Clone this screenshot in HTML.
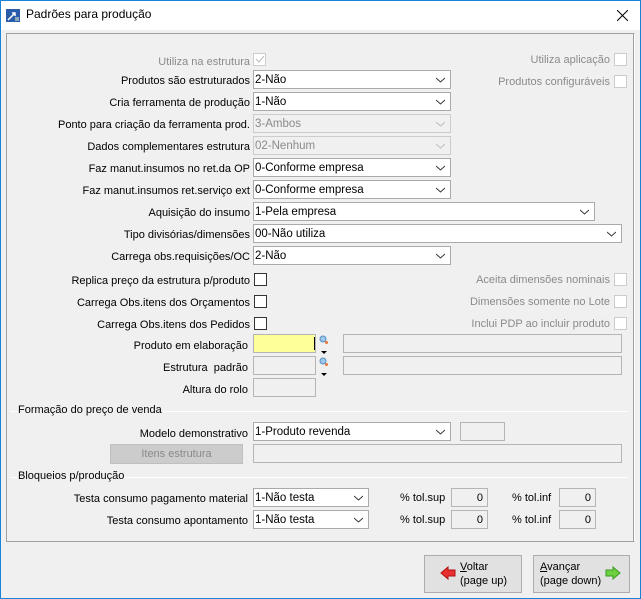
<!DOCTYPE html>
<html><head><meta charset="utf-8"><style>
*{box-sizing:border-box;margin:0;padding:0}
body{width:641px;height:599px;background:#f0f0f0;font-family:"Liberation Sans",sans-serif;font-size:11px;color:#000;position:relative;overflow:hidden}
.win{position:absolute;left:0;top:0;width:641px;height:599px;border:1px solid #1883d7}
.title{position:absolute;left:1px;top:1px;width:639px;height:29px;background:#fff}
.a{position:absolute;white-space:nowrap}
.l{position:absolute;text-align:right;width:300px;white-space:nowrap;line-height:22px;height:20px;margin-top:1px}
.r{position:absolute;text-align:right;width:200px;left:410px;white-space:nowrap}
.g{color:#8a8a8a}
.sel{position:absolute;height:19px;background:#fff;border:1px solid #aaa;line-height:18px;padding-left:1px;font-size:11.5px}
.sel.d{background:#f0f0f0;color:#8a8a8a;border-color:#ccc}
.sel svg{position:absolute;right:5px;top:6px}
.inp{position:absolute;height:19px;border:1px solid #b5b5b5;background:#f0f0f0;text-align:right;padding-right:4px;line-height:18px}
.cb{position:absolute;width:13px;height:13px;border:1px solid #333;background:#fff}
.cb.d{border-color:#ccc;background:#fff}
.btn{position:absolute;border:1px solid #adadad;background:#e1e1e1}
</style></head><body>
<div class="win"></div>
<div class="title"></div>
<svg class="a" style="left:6px;top:9px" width="14" height="13"><rect width="14" height="13" fill="#2a5caa"/><path d="M2 11 L9 4 M6 4 H9 V7" stroke="#fff" stroke-width="1.5" fill="none"/><rect x="9" y="8" width="4" height="4" fill="#8ab"/></svg>
<div class="a" style="left:26px;top:7px;font-size:12px">Padrões para produção</div>
<svg class="a" style="left:617px;top:10px" width="11" height="11"><path d="M0 0L11 11M11 0L0 11" stroke="#000" stroke-width="1"/></svg>

<div class="a" style="left:6px;top:33px;width:629px;height:509px;border:1px solid #a0a0a0;border-right-color:#fff;border-bottom-color:#a0a0a0;box-shadow:inset -1px 0 #a0a0a0"></div>

<div class="l g" style="left:-50px;top:50px">Utiliza na estrutura</div>
<div class="cb d" style="left:253px;top:53px"></div>
<svg class="a" style="left:255px;top:55px" width="10" height="9"><path d="M1 4 L4 7 L9 1" stroke="#bbb" fill="none"/></svg>
<div class="r g" style="top:54px">Utiliza aplicação</div><div class="cb d" style="left:614px;top:53px"></div>
<div class="r g" style="top:76px">Produtos configuráveis</div><div class="cb d" style="left:614px;top:75px"></div>

<div class="l" style="left:-50px;top:69px">Produtos são estruturados</div>
<div class="sel" style="left:253px;top:70px;width:198px">2-Não<svg width="9" height="6"><path d="M0 1L4.5 5L9 1" stroke="#333" fill="none"/></svg></div>
<div class="l" style="left:-50px;top:91px">Cria ferramenta de produção</div>
<div class="sel" style="left:253px;top:92px;width:198px">1-Não<svg width="9" height="6"><path d="M0 1L4.5 5L9 1" stroke="#333" fill="none"/></svg></div>
<div class="l" style="left:-50px;top:113px">Ponto para criação da ferramenta prod.</div>
<div class="sel d" style="left:253px;top:114px;width:198px">3-Ambos<svg width="9" height="6"><path d="M0 1L4.5 5L9 1" stroke="#bbb" fill="none"/></svg></div>
<div class="l" style="left:-50px;top:135px">Dados complementares estrutura</div>
<div class="sel d" style="left:253px;top:136px;width:198px">02-Nenhum<svg width="9" height="6"><path d="M0 1L4.5 5L9 1" stroke="#bbb" fill="none"/></svg></div>
<div class="l" style="left:-50px;top:157px">Faz manut.insumos no ret.da OP</div>
<div class="sel" style="left:253px;top:158px;width:198px">0-Conforme empresa<svg width="9" height="6"><path d="M0 1L4.5 5L9 1" stroke="#333" fill="none"/></svg></div>
<div class="l" style="left:-50px;top:179px">Faz manut.insumos ret.serviço ext</div>
<div class="sel" style="left:253px;top:180px;width:198px">0-Conforme empresa<svg width="9" height="6"><path d="M0 1L4.5 5L9 1" stroke="#333" fill="none"/></svg></div>
<div class="l" style="left:-50px;top:201px">Aquisição do insumo</div>
<div class="sel" style="left:253px;top:202px;width:342px">1-Pela empresa<svg width="9" height="6"><path d="M0 1L4.5 5L9 1" stroke="#333" fill="none"/></svg></div>
<div class="l" style="left:-50px;top:223px">Tipo divisórias/dimensões</div>
<div class="sel" style="left:253px;top:224px;width:369px">00-Não utiliza<svg width="9" height="6"><path d="M0 1L4.5 5L9 1" stroke="#333" fill="none"/></svg></div>
<div class="l" style="left:-50px;top:245px">Carrega obs.requisições/OC</div>
<div class="sel" style="left:253px;top:246px;width:198px">2-Não<svg width="9" height="6"><path d="M0 1L4.5 5L9 1" stroke="#333" fill="none"/></svg></div>

<div class="l" style="left:-50px;top:269px">Replica preço da estrutura p/produto</div><div class="cb" style="left:254px;top:273px"></div>
<div class="l" style="left:-50px;top:291px">Carrega Obs.itens dos Orçamentos</div><div class="cb" style="left:254px;top:295px"></div>
<div class="l" style="left:-50px;top:313px">Carrega Obs.itens dos Pedidos</div><div class="cb" style="left:254px;top:317px"></div>
<div class="r g" style="top:274px">Aceita dimensões nominais</div><div class="cb d" style="left:614px;top:273px"></div>
<div class="r g" style="top:296px">Dimensões somente no Lote</div><div class="cb d" style="left:614px;top:295px"></div>
<div class="r g" style="top:318px">Inclui PDP ao incluir produto</div><div class="cb d" style="left:614px;top:317px"></div>

<div class="l" style="left:-52px;top:334px">Produto em elaboração</div>
<div class="inp" style="left:253px;top:334px;width:63px;background:#ffff99"></div>
<div class="a" style="left:314px;top:337px;width:1px;height:13px;background:#000"></div>
<div class="l" style="left:-52px;top:356px">Estrutura&nbsp; padrão</div>
<div class="inp" style="left:253px;top:356px;width:63px"></div>
<div class="l" style="left:-52px;top:378px">Altura do rolo</div>
<div class="inp" style="left:253px;top:378px;width:63px"></div>
<svg class="a" style="left:319px;top:335px" width="10" height="22"><circle cx="4" cy="4" r="3" fill="#9cc8ea" stroke="#5a8fc0"/><circle cx="7.5" cy="7.5" r="1.5" fill="#e8773a"/><path d="M2 16H8L5 19Z" fill="#000"/></svg>
<svg class="a" style="left:319px;top:357px" width="10" height="22"><circle cx="4" cy="4" r="3" fill="#9cc8ea" stroke="#5a8fc0"/><circle cx="7.5" cy="7.5" r="1.5" fill="#e8773a"/><path d="M2 16H8L5 19Z" fill="#000"/></svg>
<div class="inp" style="left:343px;top:334px;width:279px"></div>
<div class="inp" style="left:343px;top:356px;width:279px"></div>

<div class="a" style="left:10px;top:411px;width:618px;height:1px;background:#a0a0a0;border-bottom:1px solid #fff"></div>
<div class="a" style="left:17px;top:404px;background:#f0f0f0;padding:0 1px">Formação do preço de venda</div>
<div class="l" style="left:-52px;top:422px">Modelo demonstrativo</div>
<div class="sel" style="left:253px;top:422px;width:198px">1-Produto revenda<svg width="9" height="6"><path d="M0 1L4.5 5L9 1" stroke="#333" fill="none"/></svg></div>
<div class="inp" style="left:460px;top:422px;width:45px"></div>
<div class="btn" style="left:110px;top:444px;width:133px;height:20px;background:#cccccc;border-color:#bfbfbf;color:#8a8a8a;text-align:center;line-height:18px">Itens estrutura</div>
<div class="inp" style="left:253px;top:444px;width:369px"></div>

<div class="a" style="left:10px;top:477px;width:618px;height:1px;background:#a0a0a0;border-bottom:1px solid #fff"></div>
<div class="a" style="left:17px;top:470px;background:#f0f0f0;padding:0 1px">Bloqueios p/produção</div>
<div class="l" style="left:-52px;top:487px">Testa consumo pagamento material</div>
<div class="sel" style="left:253px;top:488px;width:116px">1-Não testa<svg width="9" height="6"><path d="M0 1L4.5 5L9 1" stroke="#333" fill="none"/></svg></div>
<div class="l" style="left:-52px;top:509px">Testa consumo apontamento</div>
<div class="sel" style="left:253px;top:510px;width:116px">1-Não testa<svg width="9" height="6"><path d="M0 1L4.5 5L9 1" stroke="#333" fill="none"/></svg></div>
<div class="a" style="left:400px;top:492px">% tol.sup</div><div class="inp" style="left:451px;top:488px;width:37px">0</div>
<div class="a" style="left:512px;top:492px">% tol.inf</div><div class="inp" style="left:559px;top:488px;width:37px">0</div>
<div class="a" style="left:400px;top:514px">% tol.sup</div><div class="inp" style="left:451px;top:510px;width:37px">0</div>
<div class="a" style="left:512px;top:514px">% tol.inf</div><div class="inp" style="left:559px;top:510px;width:37px">0</div>

<div class="btn" style="left:424px;top:555px;width:98px;height:38px"></div>
<svg class="a" style="left:440px;top:566px" width="16" height="14"><path d="M1 7L8 1V4H15V10H8V13Z" fill="#e83030" stroke="#b01010"/></svg>
<div class="a" style="left:460px;top:560px;line-height:14px"><u>V</u>oltar<br>(page up)</div>
<div class="btn" style="left:533px;top:555px;width:97px;height:38px"></div>
<div class="a" style="left:540px;top:560px;line-height:14px"><u>A</u>vançar<br>(page down)</div>
<svg class="a" style="left:605px;top:566px" width="16" height="14"><path d="M15 7L8 1V4H1V10H8V13Z" fill="#6cd040" stroke="#3a9a20"/></svg>
</body></html>
